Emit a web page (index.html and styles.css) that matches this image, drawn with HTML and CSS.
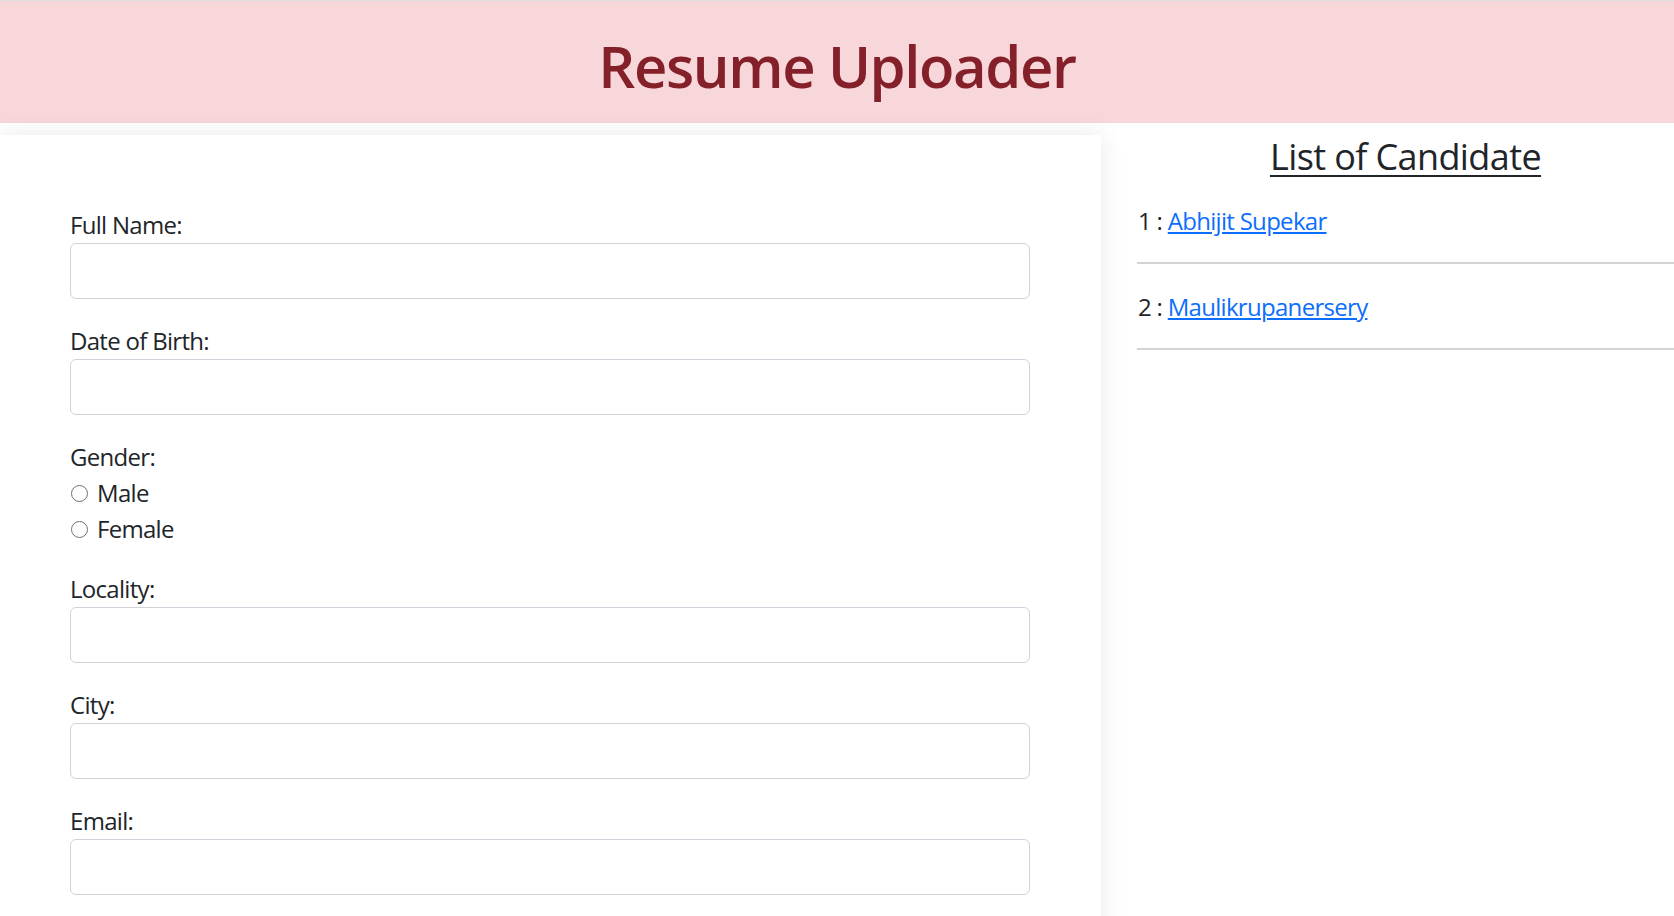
FILE: index.html
```html
<!DOCTYPE html>
<html lang="en">
<head>
<meta charset="utf-8">
<title>Resume Uploader</title>
<link rel="stylesheet" href="styles.css">
</head>
<body>
<header class="banner">
  <h1 class="banner-title">Resume Uploader</h1>
</header>
<main class="layout">
  <section class="form-card">
    <form class="resume-form">
      <div class="field">
        <label class="field-label" for="name">Full Name:</label>
        <input class="field-input" type="text" id="name">
      </div>
      <div class="field">
        <label class="field-label" for="dob">Date of Birth:</label>
        <input class="field-input" type="text" id="dob">
      </div>
      <div class="field">
        <div class="field-label">Gender:</div>
        <label class="radio-row"><input class="radio" type="radio" name="gender"><span>Male</span></label>
        <label class="radio-row"><input class="radio" type="radio" name="gender"><span>Female</span></label>
      </div>
      <div class="field">
        <label class="field-label" for="locality">Locality:</label>
        <input class="field-input" type="text" id="locality">
      </div>
      <div class="field">
        <label class="field-label" for="city">City:</label>
        <input class="field-input" type="text" id="city">
      </div>
      <div class="field">
        <label class="field-label" for="email">Email:</label>
        <input class="field-input" type="text" id="email">
      </div>
    </form>
  </section>
  <aside class="candidates">
    <h4 class="candidates-title">List of Candidate</h4>
    <div class="candidate">1 : <a class="candidate-link" href="#">Abhijit Supekar</a></div>
    <hr class="divider">
    <div class="candidate">2 : <a class="candidate-link" href="#">Maulikrupanersery</a></div>
    <hr class="divider">
  </aside>
</main>
</body>
</html>
```
FILE: styles.css
```css
html, body {
  margin: 0;
  padding: 0;
  background: #fff;
}
body {
  font-family: "Open Sans", "Noto Sans", sans-serif;
  color: #212529;
  font-size: 24px;
  letter-spacing: -0.7px;
}
.banner {
  border-top: 1px solid #dedede;
  background: #f8d7da;
  padding: 30px 0 22px;
  text-align: center;
}
.banner-title {
  margin: 0;
  font-size: 58px;
  line-height: 70px;
  font-weight: 600;
  color: #842029;
  letter-spacing: -1.4px;
}
.layout {
  display: flex;
  margin-top: 12px;
}
.form-card {
  width: 1101px;
  box-sizing: border-box;
  padding: 72px 71px 72px 70px;
  background: #fff;
  box-shadow: 0 0 24px rgba(0, 0, 0, 0.09);
  flex: none;
}
.resume-form {
  display: flex;
  flex-direction: column;
  gap: 24px;
}
.field {
  display: flex;
  flex-direction: column;
}
.field-label {
  line-height: 36px;
}
.field-input {
  box-sizing: border-box;
  width: 100%;
  height: 56px;
  border: 1px solid #ced4da;
  border-radius: 6px;
  margin: 0;
  font: inherit;
}
.radio-row {
  display: flex;
  align-items: center;
  line-height: 36px;
  gap: 9px;
}
.radio {
  appearance: none;
  -webkit-appearance: none;
  width: 17px;
  height: 17px;
  margin: 0 0 0 1px;
  border: 1.5px solid #6f6f6f;
  border-radius: 50%;
  box-sizing: border-box;
  background: #fff;
}
.candidates {
  flex: 1;
  padding-left: 36px;
}
.candidates-title {
  margin: 0 0 25px;
  font-size: 36px;
  line-height: 43px;
  font-weight: 500;
  letter-spacing: -0.6px;
  text-align: center;
  text-decoration: underline;
  text-decoration-thickness: 2px;
  text-underline-offset: 5px;
}
.candidate {
  line-height: 36px;
  padding-left: 1px;
}
.candidate-link {
  color: #0d6efd;
  text-decoration: underline;
}
.divider {
  margin: 23px 0 25px;
  border: 0;
  border-top: 2px solid #d4d4d4;
  height: 0;
}
```
